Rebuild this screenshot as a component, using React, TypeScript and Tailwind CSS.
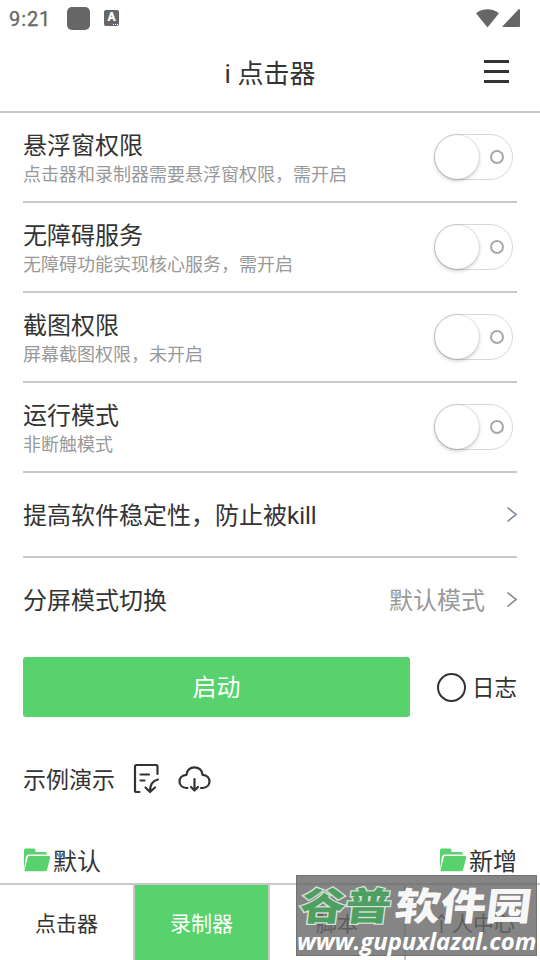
import type { ReactNode } from 'react';

type PermissionItem = {
  title: string;
  hint: string;
};

const permissions: PermissionItem[] = [
  { title: '悬浮窗权限', hint: '点击器和录制器需要悬浮窗权限，需开启' },
  { title: '无障碍服务', hint: '无障碍功能实现核心服务，需开启' },
  { title: '截图权限', hint: '屏幕截图权限，未开启' },
  { title: '运行模式', hint: '非断触模式' },
];

const tabs = ['点击器', '录制器', '脚本', '个人中心'];
const activeTab = '录制器';

function StatusBar() {
  return (
    <div className="flex h-9 items-center pr-5 pl-[9px] text-[#666666]">
      <span className="w-[58px] pt-[2px] text-[20px] leading-9 tracking-[0.9px] [-webkit-text-stroke:0.3px_#666666]">9:21</span>
      <span className="h-[23px] w-[23px] rounded-[5px] bg-[#666666]" />
      <span className="relative ml-[14px] h-4 w-[15px] rounded-[2px] bg-[#666666] text-center text-[12px] leading-[15px] font-black text-white">
        A
        <span className="absolute right-[1px] bottom-[1px] flex gap-px">
          <i className="h-px w-px bg-white" />
          <i className="h-px w-px bg-white" />
          <i className="h-px w-px bg-white" />
        </span>
      </span>
      <svg className="ml-auto h-[19px] w-[23px]" viewBox="0 0 23 19">
        <path d="M0 4.200C6.500-1 16.500-1 23 4.200L11.500 18.500Z" fill="#666666" />
      </svg>
      <svg className="ml-[3px] h-[18px] w-[18px]" viewBox="0 0 18 18">
        <path d="M17 0q1 0 1 1v16q0 1-1 1H1q-1 0-.4-.8L16.400.400Z" fill="#666666" />
      </svg>
    </div>
  );
}

function Toggle() {
  return (
    <div className="mr-1 flex h-[46px] w-[79px] items-center justify-between rounded-full border-[1.5px] border-[#d8d8d8] pr-[8px]">
      <span className="h-[44px] w-[44px] rounded-full bg-white shadow-[0_2px_4px_rgba(0,0,0,0.2),0_0_2px_rgba(0,0,0,0.22)]" />
      <span className="h-[14px] w-[14px] rounded-full border-2 border-[#a8a8a8]" />
    </div>
  );
}

function PermissionRow({ title, hint }: PermissionItem) {
  return (
    <div className="flex h-[90px] items-center justify-between border-b-2 border-[#c8c8c8]">
      <div>
        <div className="pt-1 text-[24px] leading-[32px]">{title}</div>
        <div className="text-[18px] leading-[26px] text-[#999999]">{hint}</div>
      </div>
      <Toggle />
    </div>
  );
}

function Chevron() {
  return (
    <svg className="h-4 w-[10px]" viewBox="0 0 10 16" fill="none" stroke="#7b8794" strokeWidth="1.500">
      <path d="M.500.500l8.500 7-8.500 7" />
    </svg>
  );
}

function FolderLabel({ children }: { children: ReactNode }) {
  return (
    <div className="flex items-center text-[24px] leading-[34px]">
      <svg className="mr-[2px] mb-[2px] h-[24px] w-[28px]" viewBox="0 0 28 24" fill="#57d26d">
        <path d="M1 21V2q0-1.500 1.500-1.500H11Q12.400.5 12.400 2v2H22q2 0 2 2v.5H5.500q-2 0-2.500 2L1 21.500Z" />
        <path d="M6.200 8H26q1.600 0 1.200 1.500L24 22q-.4 1.300-1.800 1.300H2.500q-1.300 0-.9-1.300L4.800 9.200Q5.100 8 6.200 8Z" />
      </svg>
      <span className="pt-[3px]">{children}</span>
    </div>
  );
}

function Watermark() {
  return (
    <div className="absolute top-[875px] left-[296px] h-[81px] w-[241px] border border-[#666666]/60 bg-[#666666]/80 whitespace-nowrap">
      <div className="absolute top-[5px] left-[3px] flex scale-y-[0.84] -skew-x-6 text-[45.5px] leading-[52px] font-black">
        <span className="text-[#4f9f62] [paint-order:stroke_fill] [-webkit-text-stroke:3px_#d5e3d8]">谷普</span>
        <span className="ml-[4px] text-white/95">软件园</span>
      </div>
      <div className="absolute top-[52px] left-0 font-['Open_Sans'] text-[23.900px] leading-[26px] font-bold text-white italic">
        www.gupuxlazal.com
      </div>
    </div>
  );
}

export default function App() {
  return (
    <main className="relative flex h-[960px] w-[540px] flex-col overflow-hidden bg-white font-[Roboto,'Noto_Sans_CJK_SC',sans-serif] text-[#333333]">
      <StatusBar />
      <header className="relative flex h-[77px] items-center justify-center border-b-2 border-[#c8c8c8] text-[26px]">
        <h1 className="pt-[2px]">i 点击器</h1>
        <div className="absolute top-6 right-[31px] flex flex-col gap-[7px]">
          <span className="h-[3px] w-[25px] bg-[#333333]" />
          <span className="h-[3px] w-[25px] bg-[#333333]" />
          <span className="h-[3px] w-[25px] bg-[#333333]" />
        </div>
      </header>

      <section className="px-[23px]">
        {permissions.map((item) => (
          <PermissionRow key={item.title} {...item} />
        ))}
        <div className="flex h-[85px] items-center justify-between border-b-2 border-[#c8c8c8] text-[24px]">
          <span className="pt-[3px]">提高软件稳定性，防止被kill</span>
          <Chevron />
        </div>
        <div className="flex h-[84px] items-center text-[24px]">
          <span className="pt-[2px]">分屏模式切换</span>
          <span className="mr-[22px] ml-auto pt-[2px] text-[#999999]">默认模式</span>
          <Chevron />
        </div>

        <div className="mt-[15px] flex h-[60px] items-center justify-between">
          <button className="h-full w-[387px] rounded-[3px] bg-[#57d26d] pt-[2px] text-[24px] text-white">启动</button>
          <div className="flex items-center text-[22.5px]">
            <span className="mr-[6px] h-[29px] w-[29px] rounded-full border-[2.5px] border-[#333333]" />
            <span className="pt-1">日志</span>
          </div>
        </div>

        <div className="mt-[43px] flex h-[38px] items-center text-[23px]">
          <span className="pt-1">示例演示</span>
          <svg className="mb-[2px] ml-[18px] h-8 w-7" viewBox="0 0 28 32" fill="none" stroke="#333333" strokeWidth="2.200" strokeLinecap="round" strokeLinejoin="round">
            <path d="M6.500 30H3.500Q2 30 2 28.500V4.500Q2 3 3.500 3H23q1.500 0 1.500 1.500V12" />
            <path d="M7.500 12.500H16M7.500 18.500h4M25 17.500c-5 1-8 5-8 12M12.500 25.500l4.500 4.500 5-4.500" />
          </svg>
          <svg className="mb-[2px] ml-[17px] h-8 w-[33px]" viewBox="0 0 33 32" fill="none" stroke="#333333" strokeWidth="2.200" strokeLinecap="round" strokeLinejoin="round">
            <path d="M9.500 26H8.500C-.8 25.500-.8 13.500 8.500 12.800 9 2.800 24 2.800 24.500 12.800c9.300.7 9.300 12.700 0 13.200H23" />
            <path d="M16.500 17v11M13 25l3.500 3.500 3.500-3.500" />
          </svg>
        </div>

        <div className="mt-[44px] flex justify-between">
          <FolderLabel>默认</FolderLabel>
          <FolderLabel>新增</FolderLabel>
        </div>
      </section>

      <nav className="mt-auto grid h-[77px] grid-cols-[135px_135px_136px_134px] border-t-2 border-[#c8c8c8] text-[21px]">
        {tabs.map((tab) => (
          <div
            key={tab}
            className={
              tab === activeTab
                ? 'flex items-center justify-center border-r-2 border-[#c8c8c8] bg-[#57d26d] pt-[5px] text-white'
                : 'flex items-center justify-center border-r-2 border-[#c8c8c8] pt-[5px] last:border-r-0'
            }
          >
            {tab}
          </div>
        ))}
      </nav>
      <Watermark />
    </main>
  );
}
